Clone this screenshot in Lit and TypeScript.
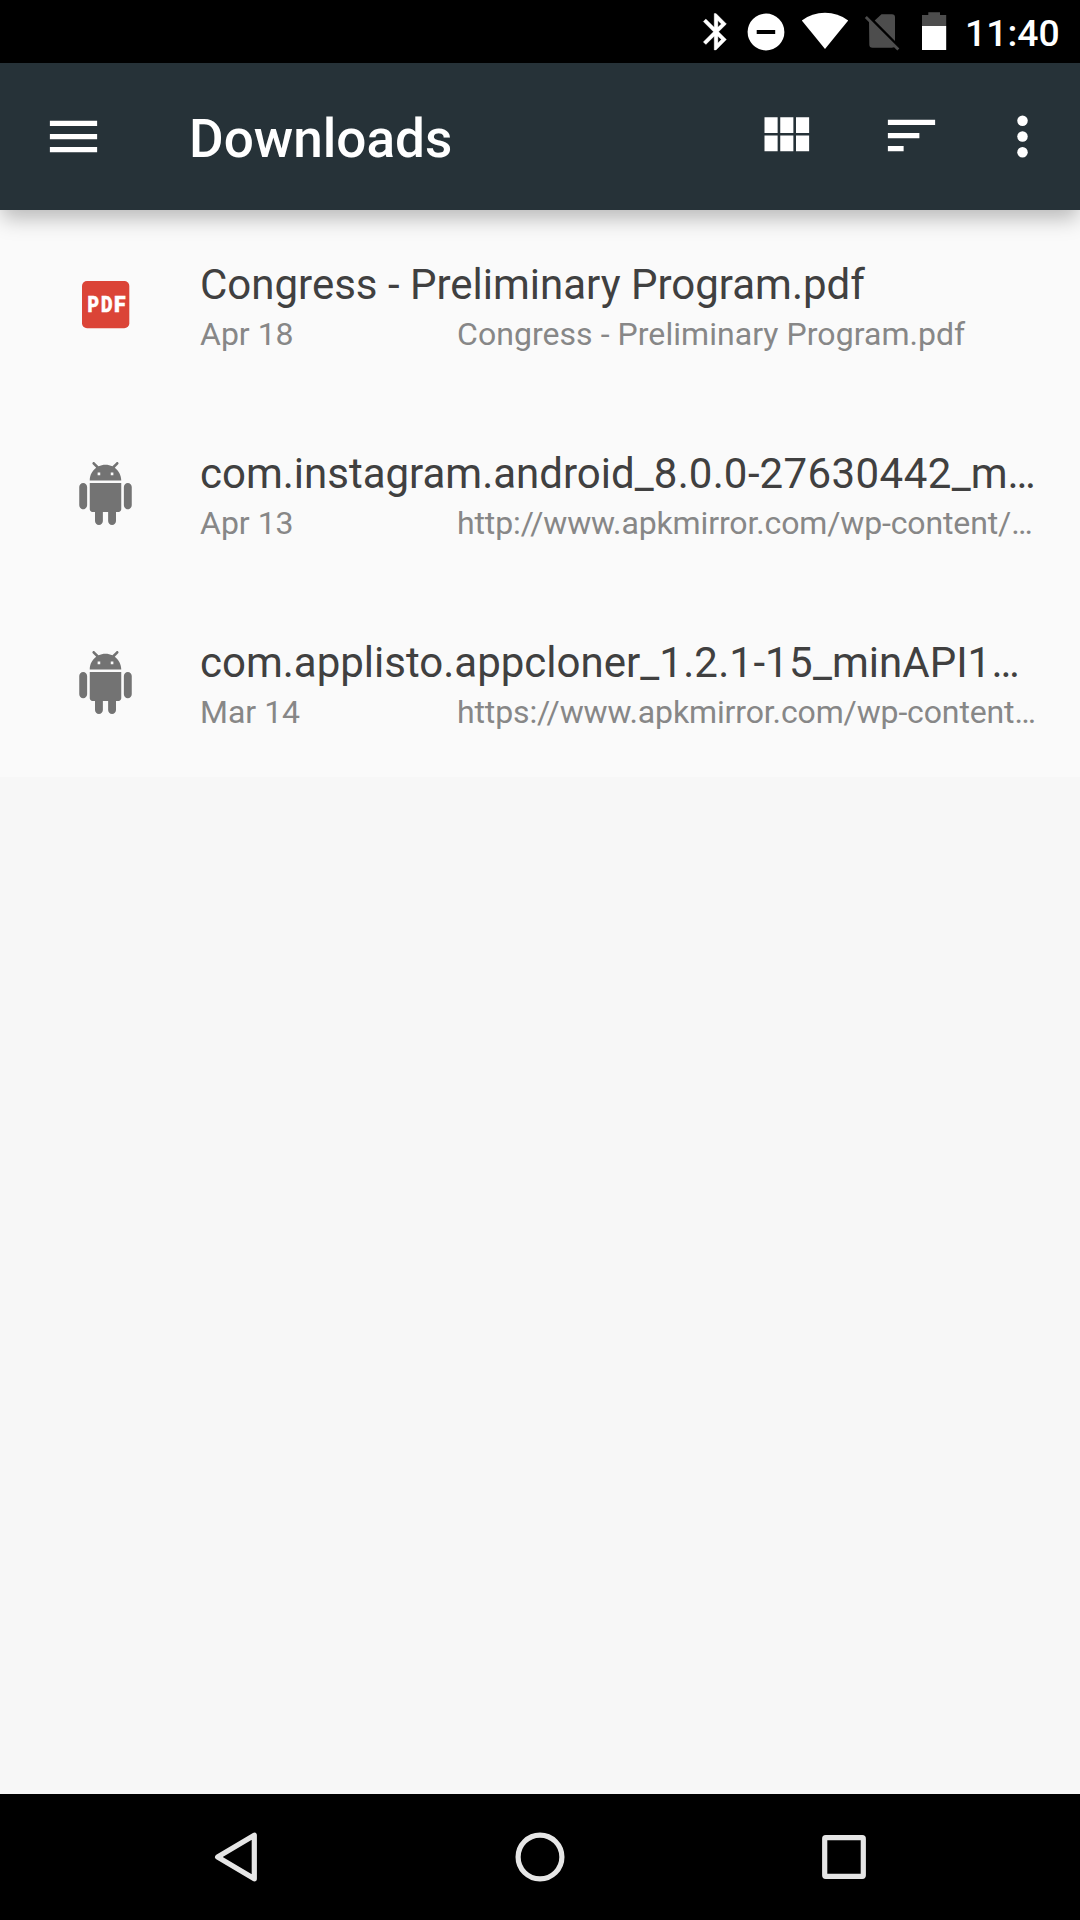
import { LitElement, html, css, svg } from "lit";
import { customElement, property } from "lit/decorators.js";

const BLUETOOTH = "M17.71 7.71L12 2h-1v7.59L6.41 5 5 6.41 10.59 12 5 17.59 6.41 19 11 14.41V22h1l5.71-5.71-4.3-4.29 4.3-4.29zM13 5.83l1.88 1.88L13 9.59V5.83zm1.88 10.46L13 18.17v-3.76l1.88 1.88z";
const ANDROID = "M6 18c0 .55.45 1 1 1h1v3.5c0 .83.67 1.5 1.5 1.5s1.5-.67 1.5-1.5V19h2v3.5c0 .83.67 1.5 1.5 1.5s1.5-.67 1.5-1.5V19h1c.55 0 1-.45 1-1V8H6v10zM3.5 8C2.67 8 2 8.67 2 9.5v7c0 .83.67 1.5 1.5 1.5S5 17.33 5 16.5v-7C5 8.67 4.33 8 3.5 8zm17 0c-.83 0-1.5.67-1.5 1.5v7c0 .83.67 1.5 1.5 1.5s1.5-.67 1.5-1.5v-7c0-.83-.67-1.5-1.5-1.5zm-4.97-5.84l1.3-1.3c.2-.2.2-.51 0-.71-.2-.2-.51-.2-.71 0l-1.48 1.48C13.85 1.23 12.95 1 12 1c-.96 0-1.86.23-2.66.63L7.85.15c-.2-.2-.51-.2-.71 0-.2.2-.2.51 0 .71l1.31 1.31C6.97 3.26 6 5.01 6 7h12c0-1.99-.97-3.75-2.47-4.84zM10 5H9V4h1v1zm5 0h-1V4h1v1z";

interface Download {
  kind: "pdf" | "apk";
  name: string;
  date: string;
  source: string;
}

const DOWNLOADS: Download[] = [
  { kind: "pdf", name: "Congress - Preliminary Program.pdf", date: "Apr 18", source: "Congress - Preliminary Program.pdf" },
  { kind: "apk", name: "com.instagram.android_8.0.0-27630442_m…", date: "Apr 13", source: "http://www.apkmirror.com/wp-content/…" },
  { kind: "apk", name: "com.applisto.appcloner_1.2.1-15_minAPI1…", date: "Mar 14", source: "https://www.apkmirror.com/wp-content…" },
];

@customElement("status-bar")
class StatusBar extends LitElement {
  static styles = css`
    :host { display: block; height: 63px; background: #000; }
    .bar { display: flex; justify-content: flex-end; height: 63px; padding-right: 22px; box-sizing: border-box; }
    .icons { display: block; width: 265px; height: 63px; flex: none; }
    .clock { color: #fff; font: 500 37.3px/63px Roboto, sans-serif; padding-top: 2px; width: 93px; text-align: right; white-space: nowrap; }
  `;
  render() {
    return html`<div class="bar">
      <svg class="icons" viewBox="700 0 265 63">
        <path transform="translate(694.2 9.900) scale(1.82)" d=${BLUETOOTH} fill="#fff" stroke="#fff" stroke-width="0.2" />
        <circle cx="766" cy="32" r="18.400" fill="#fff" />
        <rect x="756.700" y="30" width="18.500" height="4" fill="#000" />
        <path d="M825 49 L801.800 20.500 Q812 12.800 825 12.800 T848.200 20.500 Z" fill="#fff" />
        <path d="M881.500 14.300 H892 Q895 14.300 895 17.300 V41 L874.700 20.500 Z M869 20 L895 46 Q894.500 47.700 892 47.700 H872.500 Q869.300 47.700 869.300 44.500 Z" fill="#4d4d4d" />
        <path d="M865.800 17 L898.300 49.500" stroke="#4d4d4d" stroke-width="2.800" />
        <path d="M922 26 V15 H928.300 V12.300 H940 V15 H946.200 V26 Z" fill="#4d4d4d" />
        <rect x="922" y="26" width="24.200" height="24" fill="#fff" />
      </svg>
      <div class="clock">11:40</div>
    </div>`;
  }
}

@customElement("tool-bar")
class ToolBar extends LitElement {
  static styles = css`
    :host { display: block; position: relative; z-index: 1; }
    .bar { display: flex; align-items: center; height: 147px; background: #263238; box-sizing: border-box; padding: 0 26px 0 42px; box-shadow: 0 10px 20px -2px rgba(0, 0, 0, 0.27); }
    .icon { display: block; width: 63px; height: 63px; flex: none; fill: #fff; }
    .raised { margin-top: -1px; }
    .title { flex: 1; padding-left: 84px; color: #fff; font: 500 53.1px/62px Roboto, sans-serif; padding-top: 5px; }
    .actions { display: flex; }
    .actions .icon + .icon { margin-left: 63px; }
    .actions .icon.more { margin-left: 48px; }
  `;
  render() {
    return html`<div class="bar">
      <svg class="icon" viewBox="0 0 24 24"><path d="M3 18h18v-2H3v2zm0-5h18v-2H3v2zm0-7v2h18V6H3z" /></svg>
      <div class="title">Downloads</div>
      <div class="actions">
        <svg class="icon raised" viewBox="0 0 24 24"><path d="M4 11h5V5H4v6zm0 7h5v-6H4v6zm6 0h5v-6h-5v6zm6 0h5v-6h-5v6zm-6-7h5V5h-5v6zm6-6v6h5V5h-5z" /></svg>
        <svg class="icon raised" viewBox="0 0 24 24"><path d="M3 18h6v-2H3v2zM3 6v2h18V6H3zm0 7h12v-2H3v2z" /></svg>
        <svg class="icon more" viewBox="0 0 24 24"><circle cx="12" cy="6" r="2" /><circle cx="12" cy="12" r="2" /><circle cx="12" cy="18" r="2" /></svg>
      </div>
    </div>`;
  }
}

@customElement("download-row")
class DownloadRow extends LitElement {
  @property({ attribute: false }) item!: Download;
  static styles = css`
    :host { display: block; }
    .row { display: flex; align-items: center; height: 189px; box-sizing: border-box; padding: 0 42px 0 74px; background: #fafafa; font-family: Roboto, sans-serif; }
    .icon { display: block; width: 63px; height: 63px; flex: none; margin-right: 63px; }
    .badge { font: 900 21.8px Roboto, sans-serif; fill: #fff; stroke: #fff; stroke-width: 0.5; }
    .text { flex: 1; min-width: 0; padding-top: 4px; }
    .name { font-size: 42px; line-height: 50px; color: #404040; white-space: nowrap; }
    .digits { letter-spacing: 0.42px; }
    .meta { display: flex; font-size: 32px; line-height: 38px; margin-top: 5px; color: #878787; white-space: nowrap; }
    .date { width: 257px; flex: none; }
    .file { letter-spacing: 0.05px; }
    .url { letter-spacing: -0.13px; }
  `;
  render() {
    const icon = this.item.kind === "pdf"
      ? svg`<rect x="8" y="8" width="47.300" height="47.300" rx="5" fill="#db4437" />
          <text class="badge" y="39.200"><tspan x="13.500" textLength="11.500" lengthAdjust="spacingAndGlyphs">P</tspan><tspan x="26.900" textLength="11.500" lengthAdjust="spacingAndGlyphs">D</tspan><tspan x="40.100" textLength="11.500" lengthAdjust="spacingAndGlyphs">F</tspan></text>`
      : svg`<path transform="scale(2.625)" fill="#737373" d=${ANDROID} />`;
    // Digits are tracked slightly wider than the letters around them.
    const name = this.item.name.split(/(\d+)/).map((part) => (/^\d/.test(part) ? html`<span class="digits">${part}</span>` : part));
    return html`<div class="row">
      <svg class="icon" viewBox="0 0 63 63">${icon}</svg>
      <div class="text">
        <div class="name">${name}</div>
        <div class="meta"><span class="date">${this.item.date}</span><span class=${this.item.kind === "pdf" ? "file" : "url"}>${this.item.source}</span></div>
      </div>
    </div>`;
  }
}

@customElement("navigation-bar")
class NavigationBar extends LitElement {
  static styles = css`
    :host { display: block; }
    .bar { display: flex; justify-content: center; align-items: center; gap: 178px; height: 126px; background: #000; }
    .key { display: block; width: 126px; height: 126px; fill: none; stroke: #e6e6e6; stroke-width: 5.2; stroke-linejoin: round; }
  `;
  render() {
    return html`<div class="bar">
      <svg class="key" viewBox="0 0 126 126"><path d="M44.600 63 L81.300 41.200 V84.800 Z" /></svg>
      <svg class="key" viewBox="0 0 126 126"><circle cx="63" cy="63" r="21.900" /></svg>
      <svg class="key" viewBox="0 0 126 126"><rect x="43.700" y="43.700" width="38.600" height="38.600" rx="1" /></svg>
    </div>`;
  }
}

@customElement("app-root")
class AppRoot extends LitElement {
  static styles = css`
    :host { display: block; }
    .screen { display: flex; flex-direction: column; width: 1080px; height: 1920px; overflow: hidden; background: #f7f7f7; }
    .list { flex: 1; }
  `;
  render() {
    return html`<div class="screen">
      <status-bar></status-bar>
      <tool-bar></tool-bar>
      <div class="list">${DOWNLOADS.map((d) => html`<download-row .item=${d}></download-row>`)}</div>
      <navigation-bar></navigation-bar>
    </div>`;
  }
}
